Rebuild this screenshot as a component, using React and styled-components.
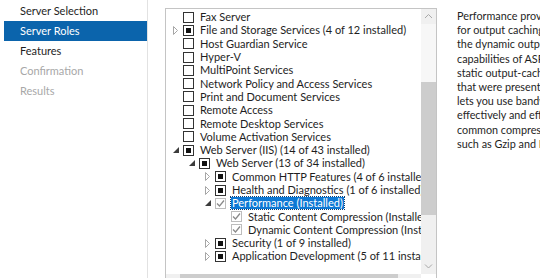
import React from "react";
import styled, { createGlobalStyle } from "styled-components";

const GlobalStyle = createGlobalStyle`
  html, body {
    margin: 0;
    padding: 0;
    background: #fff;
  }
  body {
    font-family: Lato, "Open Sans", sans-serif;
    font-size: 11px;
    color: #1e1e1e;
  }
`;

const navItems = [
  { label: "Server Selection", state: "normal" },
  { label: "Server Roles", state: "active" },
  { label: "Features", state: "normal" },
  { label: "Confirmation", state: "disabled" },
  { label: "Results", state: "disabled" },
];

const roles = [
  { level: 0, text: "Fax Server", box: "empty" },
  { level: 0, text: "File and Storage Services (4 of 12 installed)", box: "partial", arrow: "closed" },
  { level: 0, text: "Host Guardian Service", box: "empty" },
  { level: 0, text: "Hyper-V", box: "empty" },
  { level: 0, text: "MultiPoint Services", box: "empty" },
  { level: 0, text: "Network Policy and Access Services", box: "empty" },
  { level: 0, text: "Print and Document Services", box: "empty" },
  { level: 0, text: "Remote Access", box: "empty" },
  { level: 0, text: "Remote Desktop Services", box: "empty" },
  { level: 0, text: "Volume Activation Services", box: "empty" },
  { level: 0, text: "Web Server (IIS) (14 of 43 installed)", box: "partial", arrow: "open" },
  { level: 1, text: "Web Server (13 of 34 installed)", box: "partial", arrow: "open" },
  { level: 2, text: "Common HTTP Features (4 of 6 installed)", box: "partial", arrow: "closed" },
  { level: 2, text: "Health and Diagnostics (1 of 6 installed)", box: "partial", arrow: "closed" },
  { level: 2, text: "Performance (Installed)", box: "checked", arrow: "open", selected: true },
  { level: 3, text: "Static Content Compression (Installed)", box: "checked" },
  { level: 3, text: "Dynamic Content Compression (Installed)", box: "checked" },
  { level: 2, text: "Security (1 of 9 installed)", box: "partial", arrow: "closed" },
  { level: 2, text: "Application Development (5 of 11 installed)", box: "partial", arrow: "closed" },
];

const description = [
  "Performance provides infrastructure",
  "for output caching by integrating",
  "the dynamic output-caching",
  "capabilities of ASP.NET with the",
  "static output-caching capabilities",
  "that were present in IIS 6.0. IIS also",
  "lets you use bandwidth more",
  "effectively and efficiently by using",
  "common compression mechanisms",
  "such as Gzip and Deflate.",
];

function Arrow({ kind }) {
  if (kind === "open") {
    return (
      <svg width="6" height="6" viewBox="0 0 6 6">
        <path d="M6 0 L6 6 L0 6 Z" fill="#3c3c3c" />
      </svg>
    );
  }
  return (
    <svg width="5" height="9" viewBox="0 0 5 9">
      <path d="M0.5 0.5 L4.5 4.5 L0.5 8.5 Z" fill="none" stroke="#a6a6a6" strokeWidth="1" />
    </svg>
  );
}

function Box({ kind }) {
  return (
    <CheckBox $kind={kind}>
      {kind === "partial" && <Fill />}
      {kind === "checked" && (
        <svg width="9" height="9" viewBox="0 0 9 9">
          <path d="M1 4.5 L3.5 7 L8 1.5" fill="none" stroke="#8a8a8a" strokeWidth="1.3" />
        </svg>
      )}
    </CheckBox>
  );
}

function Chevron({ dir }) {
  const d = {
    up: "M1 5 L4.5 1.5 L8 5",
    down: "M1 1.5 L4.5 5 L8 1.5",
    left: "M5 1 L1.5 4.5 L5 8",
    right: "M1.5 1 L5 4.5 L1.5 8",
  }[dir];
  const w = dir === "up" || dir === "down" ? 9 : 7;
  const h = dir === "up" || dir === "down" ? 7 : 9;
  return (
    <svg width={w} height={h} viewBox={`0 0 ${w} ${h}`}>
      <path d={d} fill="none" stroke="#a8a8a8" strokeWidth="1" />
    </svg>
  );
}

export default function App() {
  return (
    <>
      <GlobalStyle />
      <Page>
        <Nav>
          {navItems.map((item) => (
            <NavItem key={item.label} $state={item.state}>
              {item.label}
            </NavItem>
          ))}
        </Nav>
        <Main>
          <TreeFrame>
            <TreeBody>
              <TreeList>
                {roles.map((r) => (
                  <Row key={r.text} $level={r.level}>
                    <ArrowSlot>{r.arrow && <Arrow kind={r.arrow} />}</ArrowSlot>
                    <Box kind={r.box} />
                    <Label $selected={r.selected}>{r.text}</Label>
                  </Row>
                ))}
              </TreeList>
              <VScroll>
                <ScrollBtn>
                  <Chevron dir="up" />
                </ScrollBtn>
                <VTrack>
                  <VGap $h={58} />
                  <VThumb />
                </VTrack>
                <ScrollBtn>
                  <Chevron dir="down" />
                </ScrollBtn>
              </VScroll>
            </TreeBody>
            <BottomBar>
              <HScroll>
                <HBtn>
                  <Chevron dir="left" />
                </HBtn>
                <HThumb />
                <HTrack />
                <HBtn>
                  <Chevron dir="right" />
                </HBtn>
              </HScroll>
              <Corner />
            </BottomBar>
          </TreeFrame>
          <Description>
            {description.map((line) => (
              <DescLine key={line}>{line}</DescLine>
            ))}
          </Description>
        </Main>
      </Page>
    </>
  );
}

const Page = styled.div`
  display: flex;
  width: 540px;
  height: 278px;
  overflow: hidden;
`;

const Nav = styled.div`
  width: 143px;
  flex-shrink: 0;
  padding: 1px 0 0 4px;
  border-right: 1px solid #e2e2e2;
`;

const NavItem = styled.div`
  height: 20px;
  line-height: 20px;
  padding-left: 16px;
  white-space: nowrap;
  font-size: 11px;
  background: ${(p) => (p.$state === "active" ? "#0b64ac" : "transparent")};
  color: ${(p) =>
    p.$state === "active" ? "#ffffff" : p.$state === "disabled" ? "#a8a8a8" : "#1e1e1e"};
`;

const Main = styled.div`
  flex: 1;
  display: flex;
  padding: 8px 0 0 17px;
  min-width: 0;
`;

const TreeFrame = styled.div`
  width: 270px;
  height: 280px;
  flex-shrink: 0;
  border: 1px solid #c4c4c4;
  border-bottom: none;
  display: flex;
  flex-direction: column;
`;

const TreeBody = styled.div`
  flex: 1;
  display: flex;
  min-height: 0;
`;

const TreeList = styled.div`
  flex: 1;
  overflow: hidden;
  padding-top: 1.5px;
`;

const Row = styled.div`
  display: flex;
  align-items: center;
  height: 13.3px;
  padding-left: ${(p) => 5 + p.$level * 16}px;
  white-space: nowrap;
`;

const ArrowSlot = styled.span`
  width: 12px;
  flex-shrink: 0;
  display: flex;
  align-items: center;
  padding-left: 2px;
  box-sizing: border-box;
`;

const CheckBox = styled.span`
  width: 11px;
  height: 11px;
  box-sizing: border-box;
  flex-shrink: 0;
  border: 1px solid ${(p) => (p.$kind === "checked" ? "#bdbdbd" : "#333333")};
  background: #fff;
  display: flex;
  align-items: center;
  justify-content: center;
  margin-right: 6px;
`;

const Fill = styled.span`
  width: 5px;
  height: 5px;
  background: #111;
`;

const Label = styled.span`
  padding: 0 1px;
  margin-left: -1px;
  line-height: 12px;
  background: ${(p) => (p.$selected ? "#0d78d4" : "transparent")};
  color: ${(p) => (p.$selected ? "#ffffff" : "#1e1e1e")};
  outline: ${(p) => (p.$selected ? "1px dotted #0a3e73" : "none")};
`;

const VScroll = styled.div`
  width: 15px;
  flex-shrink: 0;
  display: flex;
  flex-direction: column;
  background: #f0f0f0;
`;

const ScrollBtn = styled.div`
  height: 15px;
  display: flex;
  align-items: center;
  justify-content: center;
`;

const VTrack = styled.div`
  flex: 1;
  display: flex;
  flex-direction: column;
`;

const VGap = styled.div`
  height: ${(p) => p.$h}px;
  background: #f7f7f7;
`;

const VThumb = styled.div`
  height: 133px;
  background: #cdcdcd;
`;

const BottomBar = styled.div`
  height: 14px;
  display: flex;
  flex-shrink: 0;
  margin-bottom: 1px;
`;

const HScroll = styled.div`
  flex: 1;
  display: flex;
  background: #f0f0f0;
`;

const HBtn = styled.div`
  width: 14px;
  display: flex;
  align-items: center;
  justify-content: center;
`;

const HThumb = styled.div`
  width: 218px;
  background: #cdcdcd;
`;

const HTrack = styled.div`
  flex: 1;
`;

const Corner = styled.div`
  width: 15px;
  background: #fff;
`;

const Description = styled.div`
  padding: 1px 0 0 20px;
  white-space: nowrap;
  min-width: 0;
  overflow: hidden;
`;

const DescLine = styled.div`
  height: 14.2px;
  line-height: 14.2px;
  font-size: 10.8px;
`;
